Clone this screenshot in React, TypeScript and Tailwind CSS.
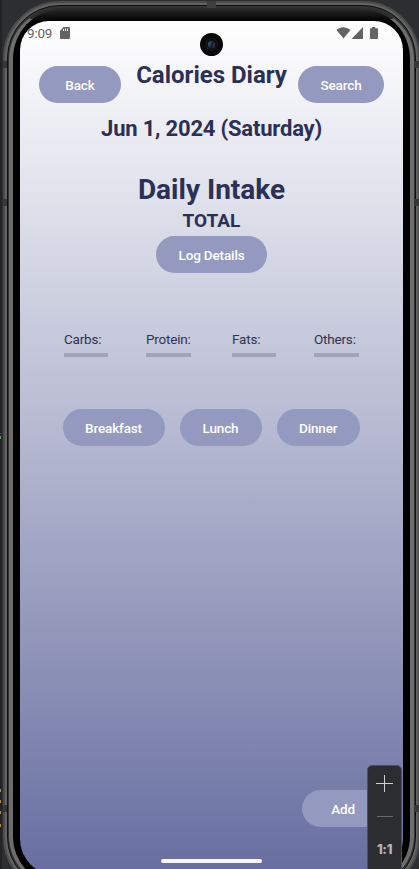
import type { ReactNode } from "react";

function Pill({ children, className = "" }: { children: ReactNode; className?: string }) {
  return (
    <button
      className={`flex h-[37px] shrink-0 items-center justify-center rounded-full bg-[#9399bf] pt-[1px] text-[13.5px] font-medium tracking-[-0.15px] text-white ${className}`}
    >
      {children}
    </button>
  );
}

function Macro({ label, className = "" }: { label: string; className?: string }) {
  return (
    <div className={`flex shrink-0 flex-col ${className}`}>
      <span className="text-[13.5px] leading-4 tracking-[-0.2px] whitespace-nowrap text-[#31334f]">{label}</span>
      <span className="mt-[6px] h-1 w-full bg-[#a3a4b7]" />
    </div>
  );
}

function StatusBar() {
  return (
    <div className="flex h-[22px] items-center pt-[1px] pr-[25px] pl-[7px] text-[#636363]">
      <span className="w-[26px] text-[13.5px] leading-4 tracking-[-0.2px]">9:09</span>
      <svg className="ml-[7px] h-3 w-[10px]" viewBox="0 0 10 12" fill="currentColor">
        <path d="M3.5 0H9q1 0 1 1v10q0 1-1 1H1q-1 0-1-1V4z" />
        <path d="M3.5 2v2M5.5 1.5V4M7.5 1.5V4" stroke="#fff" strokeWidth=".9" />
      </svg>
      <svg className="ml-auto h-[12px] w-[41px]" viewBox="0 0 41 12" fill="currentColor">
        <path d="M-.5 3Q6.500-2.500 13.500 3L6.500 11.500z" />
        <path d="M14.500 12L26 0V12z" />
        <path d="M33.500 1.300H35V0h3.200v1.300h2q.8 0 .8.8v9.100q0 .8-.8.8h-6.400q-.8 0-.8-.8V2.100q0-.8.800-.8z" />
      </svg>
    </div>
  );
}

function Screen() {
  return (
    <div className="relative h-full w-full overflow-hidden rounded-t-[29px] rounded-b-[36px] bg-linear-[180deg,#ffffff_0px,#686fa0_848px] text-[#2b3054]">
      <StatusBar />
      <div className="flex h-[61px] items-start pt-[23px] pl-[19px]">
        <Pill className="w-[82px]">Back</Pill>
        <h1 className="-mt-[5px] w-[177px] pl-[4px] text-center text-[24px] leading-[28px] font-bold whitespace-nowrap">
          Calories Diary
        </h1>
        <Pill className="w-[86px]">Search</Pill>
      </div>
      <div className="flex flex-col items-center">
        <h2 className="mt-[12px] text-[22px] leading-[26px] font-bold tracking-[-0.2px]">Jun 1, 2024 (Saturday)</h2>
        <h2 className="mt-[32px] text-[28px] leading-[32px] font-bold">Daily Intake</h2>
        <h3 className="mt-[4px] text-[19px] leading-[22px] font-bold">TOTAL</h3>
        <Pill className="mt-[4px] w-[111px]">Log Details</Pill>
      </div>
      <div className="mt-[58px] flex pl-[44px]">
        <Macro label="Carbs:" className="w-[44px]" />
        <Macro label="Protein:" className="ml-[38px] w-[45px]" />
        <Macro label="Fats:" className="ml-[41px] w-[44px]" />
        <Macro label="Others:" className="ml-[38px] w-[45px]" />
      </div>
      <div className="mt-[52px] flex pl-[42.500px]">
        <Pill className="w-[102px]">Breakfast</Pill>
        <Pill className="ml-[15px] w-[82px]">Lunch</Pill>
        <Pill className="ml-[15px] w-[83.500px]">Dinner</Pill>
      </div>
      <div className="mt-[344px] flex justify-end pr-[19px]">
        <Pill className="w-[82px]">Add</Pill>
      </div>
      <div className="mx-auto mt-[32px] h-[4px] w-[101px] rounded-full bg-[#f8f8fc]" />
      <div className="absolute top-[12px] left-[180px] h-[23px] w-[23px] rounded-full bg-[#080808] p-[5px]">
        <div className="flex h-[13px] w-[13px] items-center justify-center rounded-full border border-[#171719] bg-[#101217]">
          <div className="h-[7px] w-[7px] rounded-full bg-linear-[110deg,#346b80,#1b3444_45%,#111827_55%,#5f3970]" />
        </div>
      </div>
    </div>
  );
}

function ZoomControls() {
  return (
    <div className="absolute top-[765px] left-[365px] flex h-[110px] w-[35px] flex-col items-center rounded-[5px] border border-[#505154] bg-[#2b2d30]">
      <svg className="mt-[9px] h-[17px] w-[17px]" viewBox="0 0 17 17" stroke="#ced0d6" strokeWidth="1">
        <path d="M8.500 0v17M0 8.500h17" />
      </svg>
      <div className="mt-[24px] h-px w-4 bg-[#67686b]" />
      <span className="mt-[24px] font-['Inter'] text-[13px] leading-4 font-extrabold tracking-[-0.3px] text-[#b5b6b9]">1:1</span>
    </div>
  );
}

/* Antenna bands on the metal rim and the editor gutter marks beside the device. */
function RimDetails() {
  return (
    <>
      <div className="absolute top-[1px] left-[205px] h-[7px] w-[9px] bg-[#3f3f3f]" />
      <div className="absolute top-[61px] left-[1px] h-[7px] w-[4px] bg-[#373737]" />
      <div className="absolute top-[199px] left-[1px] h-[7px] w-[4px] bg-[#373737]" />
      <div className="absolute top-[805px] left-[1px] h-[7px] w-[4px] bg-[#373737]" />
      <div className="absolute top-[61px] right-0 h-[7px] w-[4px] bg-[#373737]" />
      <div className="absolute top-[199px] right-0 h-[7px] w-[4px] bg-[#373737]" />
      <div className="absolute top-[805px] right-0 h-[7px] w-[4px] bg-[#373737]" />
      <div className="absolute top-[433px] -left-[2px] h-px w-px bg-[#813b40]" />
      <div className="absolute top-[436px] -left-[2px] h-[3px] w-px bg-[#64a36b]" />
      <div className="absolute top-[789px] -left-[2px] h-[3px] w-px bg-[#b38c38]" />
      <div className="absolute top-[800px] -left-[2px] h-[3px] w-px bg-[#b38c38]" />
      <div className="absolute top-[811px] -left-[2px] h-[3px] w-px bg-[#b38c38]" />
      <div className="absolute top-[824px] -left-[2px] h-[3px] w-px bg-[#b38c38]" />
    </>
  );
}

export default function App() {
  return (
    <div className="relative h-[869px] w-[419px] overflow-clip border-l-2 border-[#222326] bg-[#2d2e32] font-['Roboto',sans-serif] [overflow-clip-margin:border-box]">
      <div className="ml-[1px] h-[894px] w-[417px] pt-[1px]">
        <div className="h-full w-full rounded-[57px] border-2 border-[#4c4c4c] bg-[#626262] p-[2px]">
          <div className="h-full w-full rounded-[53px] border border-[#111111] bg-[#333333] px-[1px] pt-[2px] pb-[2px]">
            <div className="h-full w-full rounded-[51px] border-x-4 border-t-2 border-b-2 border-x-[#6d6d6d] border-t-[#2c2c2c] border-b-[#6d6d6d] bg-linear-[180deg,#242424_0px,#000000_12px] px-[7px] pt-[11px] pb-[10px]">
              <Screen />
            </div>
          </div>
        </div>
      </div>
      <RimDetails />
      <ZoomControls />
    </div>
  );
}
